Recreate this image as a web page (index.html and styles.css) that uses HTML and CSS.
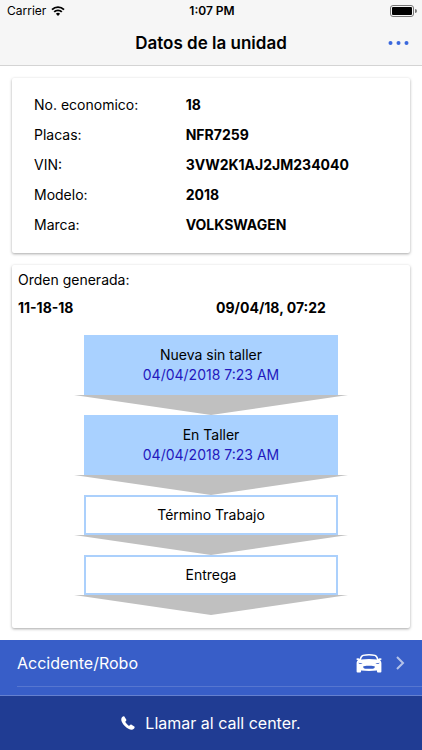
FILE: index.html
```html
<!DOCTYPE html>
<html lang="es">
<head>
  <meta charset="UTF-8">
  <meta name="viewport" content="width=device-width, initial-scale=1.0">
  <title>Datos de la unidad</title>
  <link rel="stylesheet" href="styles.css">
</head>
<body>

  <!-- Header -->
  <header class="header">
    <div class="status">
      <div class="carrier">
        <span>Carrier</span>
        <svg class="wifi" viewBox="0 0 14 10">
          <path d="M1 3.600a8.600 8.600 0 0 1 12 0M3.200 5.900a5.400 5.400 0 0 1 7.600 0" fill="none" stroke="#000" stroke-width="1.9"/>
          <path d="M4.900 7.700a3 3 0 0 1 4.200 0L7 10z"/>
        </svg>
      </div>
      <span class="clock">1:07 PM</span>
      <svg class="battery" viewBox="0 0 27 12">
        <rect x="0.5" y="0.5" width="23" height="11" rx="2.5" fill="none" stroke="#777"/>
        <rect x="2" y="2" width="20" height="8" rx="1"/>
        <path d="M25 4a2 2 0 0 1 0 4z" fill="#777"/>
      </svg>
    </div>
    <div class="toolbar">
      <h1 class="title">Datos de la unidad</h1>
      <button class="more" type="button" aria-label="Más opciones">
        <svg viewBox="0 0 20 4">
          <circle cx="2" cy="2" r="2"/>
          <circle cx="10" cy="2" r="2"/>
          <circle cx="18" cy="2" r="2"/>
        </svg>
      </button>
    </div>
  </header>

  <!-- Main Content -->
  <main class="content">
    <section class="card">
      <dl class="unit">
        <dt>No. economico:</dt>
        <dd>18</dd>
        <dt>Placas:</dt>
        <dd>NFR7259</dd>
        <dt>VIN:</dt>
        <dd>3VW2K1AJ2JM234040</dd>
        <dt>Modelo:</dt>
        <dd>2018</dd>
        <dt>Marca:</dt>
        <dd>VOLKSWAGEN</dd>
      </dl>
    </section>

    <section class="card order">
      <p class="order-label">Orden generada:</p>
      <div class="order-row">
        <span>11-18-18</span>
        <span>09/04/18, 07:22</span>
      </div>
      <ol class="steps">
        <li class="step">
          <div class="step-box done">
            <span>Nueva sin taller</span>
            <span class="step-date">04/04/2018 7:23 AM</span>
          </div>
          <div class="arrow"></div>
        </li>
        <li class="step">
          <div class="step-box done">
            <span>En Taller</span>
            <span class="step-date">04/04/2018 7:23 AM</span>
          </div>
          <div class="arrow"></div>
        </li>
        <li class="step">
          <div class="step-box">
            <span>Término Trabajo</span>
          </div>
          <div class="arrow"></div>
        </li>
        <li class="step">
          <div class="step-box">
            <span>Entrega</span>
          </div>
          <div class="arrow"></div>
        </li>
      </ol>
    </section>
  </main>

  <!-- Footer -->
  <footer class="footer">
    <div class="report">
      <a class="report-link" href="#accidente">
        <span class="report-text">Accidente/Robo</span>
        <svg class="car" viewBox="0 0 26 19">
          <path fill-rule="evenodd" d="M6.800.7Q13-.5 19.200.7c1.600.3 2.700 2.400 3.300 4.300l1-.7c.8-.3 1.800-.1 2.100.5.2.8-.6 1.200-1.600 1.200.9 1 1.400 2 1.400 3.300v8.200c0 .6-.3 1-.9 1h-2.600c-.6 0-.9-.4-.9-1v-.9Q13 17.400 5 16.600v.9c0 .6-.3 1-.9 1H1.500c-.6 0-.9-.4-.9-1V9.300C.6 8 1.100 7 2 6 1 6 .2 5.600.4 4.800c.3-.6 1.300-.8 2.100-.5l1 .7C4.100 3.100 5.200 1 6.800.7zM7.500 1.900C6.400 2.200 5.500 4 5 5.500q8-.9 16 0c-.5-1.500-1.400-3.300-2.500-3.600Q13 .9 7.500 1.900zM2.300 8.700c.5 1 1.500 1.500 3.400 1.400h.8C5.900 9.300 4.300 8.800 2.300 8.700zM23.700 8.700c-2 .1-3.600.6-4.200 1.400h.8c1.900.1 2.900-.4 3.400-1.400zM7 12.700c.4 1.100 1.200 1.900 2.200 2.100h7.600c1-.2 1.800-1 2.200-2.100-1-.7-2.400-.9-6-.9s-5 .2-6 .9z"/>
        </svg>
        <svg class="chevron" viewBox="0 0 9 14">
          <path d="M1 1l6 6-6 6"/>
        </svg>
      </a>
    </div>
    <button class="call" type="button">
      <svg class="phone" viewBox="0 0 14 14">
        <path d="M1.200 1.100C2 .3 3 .1 3.500.7l1.700 2.700c.4.700.2 1.200-.3 1.600-.7.500-.7.900-.3 1.600a10 10 0 0 0 2.800 2.800c.7.4 1.100.4 1.600-.3.4-.5.900-.7 1.600-.3l2.700 1.700c.6.500.4 1.500-.4 2.300-1.100 1.100-3 1.300-5 .3C4.900 11.700 2.300 9.100.9 6.100c-1-2-.8-3.900.3-5z"/>
      </svg>
      <span>Llamar al call center.</span>
    </button>
  </footer>

</body>
</html>
```
FILE: styles.css
```css
* {
  box-sizing: border-box;
}

body {
  display: flex;
  flex-direction: column;
  min-height: 100vh;
  margin: 0;
  background: #fff;
  color: #000;
  font-family: Inter, "Liberation Sans", sans-serif;
  font-size: 14px;
  line-height: 20px;
}

h1, p, dl, dd, ol {
  margin: 0;
  padding: 0;
}

svg {
  display: block;
}

button {
  padding: 0;
  border: none;
  background: none;
  font: inherit;
}

/* Header */
.header {
  background: #f6f6f6;
  border-bottom: 1px solid #d4d4d4;
}

.status {
  display: grid;
  grid-template-columns: 1fr auto 1fr;
  align-items: center;
  height: 21px;
  padding: 0 5px 0 7px;
  font-size: 12px;
}

.carrier {
  display: flex;
  align-items: center;
  gap: 5px;
}

.wifi {
  width: 14px;
  height: 10px;
}

.clock {
  font-weight: 600;
}

.battery {
  justify-self: end;
  width: 27px;
  height: 12px;
}

.toolbar {
  display: grid;
  grid-template-columns: 1fr auto 1fr;
  align-items: center;
  height: 44px;
  padding: 0 13px;
}

.title {
  grid-column: 2;
  font-size: 17px;
  font-weight: 600;
}

.more {
  justify-self: end;
  padding: 8px 0;
}

.more svg {
  width: 21px;
  height: 4px;
  fill: #3a68dd;
}

/* Cards */
.content {
  display: flex;
  flex: 1;
  flex-direction: column;
  gap: 12px;
  padding: 12px;
}

.card {
  border-radius: 2px;
  background: #fff;
  box-shadow: 0 1px 3px rgba(0, 0, 0, 0.35);
}

.unit {
  display: grid;
  grid-template-columns: 5fr 7fr;
  padding: 12px 12px 13px 22px;
  line-height: 30px;
}

.unit dd {
  font-weight: 700;
}

.order {
  padding: 5px 6px 13px;
}

.order-row {
  display: grid;
  grid-template-columns: 1fr 1fr;
  gap: 10px;
  padding: 8px 0 17px;
  font-weight: 700;
}

/* Steps */
.steps {
  list-style: none;
}

.step {
  display: flex;
  flex-direction: column;
  align-items: center;
}

.step-box {
  display: flex;
  flex-direction: column;
  align-items: center;
  width: 66%;
  padding: 8px;
  border: 2px solid #abd0fc;
}

.done {
  background: #a9d1ff;
  border-color: #a9d1ff;
}

.step-date {
  color: #2418bd;
}

.arrow {
  width: 71%;
  height: 20px;
  background: #c0c0c0;
  clip-path: polygon(0 0, 100% 0, 50% 100%);
}

/* Footer */
.footer {
  color: #fff;
}

.report {
  padding: 0 0 8px 17px;
  background: #385ec8;
}

.report-link {
  display: flex;
  align-items: center;
  height: 47px;
  padding-right: 17px;
  border-bottom: 1px solid #5676d0;
  color: #fff;
  font-size: 16px;
  text-decoration: none;
}

.report-text {
  flex: 1;
}

.car {
  width: 26px;
  height: 19px;
  margin-right: 14px;
  fill: #fff;
}

.chevron {
  width: 9px;
  height: 14px;
  fill: none;
  stroke: #b4c2e9;
  stroke-width: 2;
}

.call {
  display: flex;
  align-items: center;
  justify-content: center;
  gap: 10px;
  width: 100%;
  height: 55px;
  border-top: 1px solid #6580cf;
  background: #203c93;
  color: #fff;
  font-size: 16px;
}

.phone {
  width: 14px;
  height: 14px;
  fill: #fff;
}
```
